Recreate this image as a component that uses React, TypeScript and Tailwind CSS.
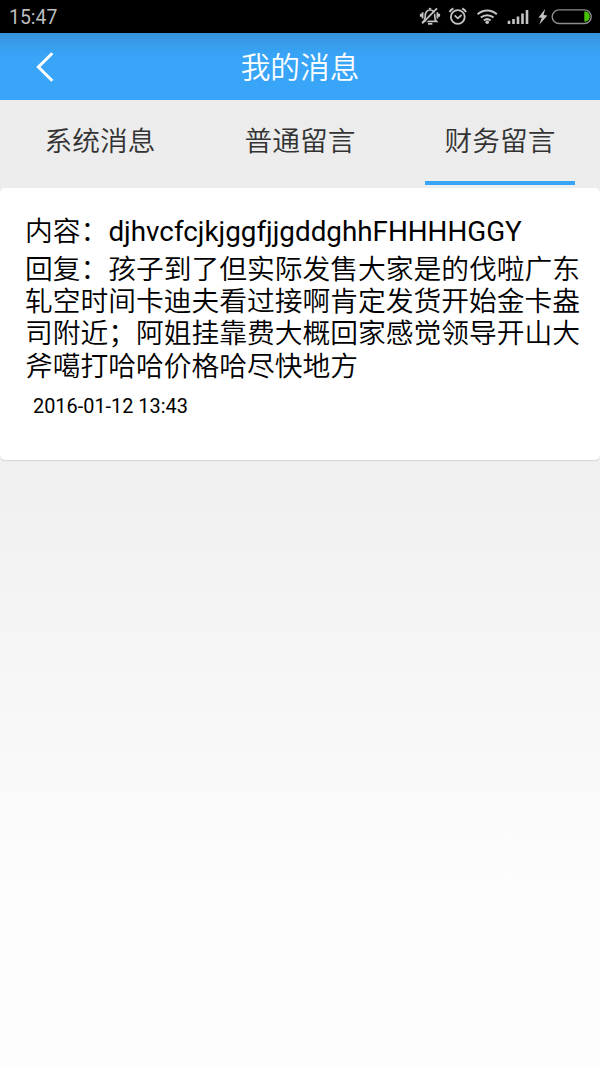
import React from 'react';

const tabs = ['系统消息', '普通留言', '财务留言'];

const StatusBar: React.FC = () => (
  <div className="flex h-[33px] items-center justify-between bg-black pl-[9px] text-[#bdbdbd]">
    <span className="pt-0.5 text-[19.4px] leading-[33px]">15:47</span>
    <svg width="184" height="33" viewBox="416 0 184 33" fill="none" stroke="#c4c4c4">
      {/* muted bell */}
      <path d="M423.6 21.4c1.4-1.2 1.6-2.4 1.6-5 0-3.8 1.8-6.4 4.8-6.4s4.8 2.6 4.8 6.4c0 2.6.2 3.8 1.6 5z" strokeWidth="1.7" />
      <path d="M428 23.8h4.4" strokeWidth="1.8" />
      <path d="M422.6 12.2v6.4M437.4 12.2v6.4M420.8 13.8v3M439.2 13.8v3" strokeWidth="1.8" />
      <path d="M428.8 8.6h2.4" strokeWidth="1.5" />
      <path d="m438 9.4-14.8 15.4" stroke="#000" strokeWidth="1.2" />
      <path d="M437 8.3 422.2 23.4" strokeWidth="1.8" />
      {/* alarm clock */}
      <circle cx="457.8" cy="17" r="6.9" strokeWidth="1.8" />
      <path d="m454.6 15.4 3.2 3 3.8-3.4" strokeWidth="1.7" />
      <path d="M449.6 12.2c.7-1.9 1.9-3 3.8-3.7M466 12.2c-.7-1.9-1.9-3-3.8-3.7" strokeWidth="1.9" />
      {/* wifi */}
      <path d="M477.6 14.2c5.4-5.1 13.8-5.1 19.2 0M480.8 17.6c3.7-3.3 9.1-3.3 12.8 0M483.8 20.6c2-1.7 4.8-1.7 6.8 0" strokeWidth="2" />
      <circle cx="487.2" cy="22.3" r="1.8" fill="#c4c4c4" stroke="none" />
      {/* signal */}
      <path d="M509 24v-3.2M513.5 24v-5M518 24v-7.5M522.5 24v-10.5M527 24V10" strokeWidth="2.6" />
      {/* charging */}
      <path d="m545.3 8.8-6.8 8.6 3.3.3-2.6 7 8.2-9.3-3.9-.3z" fill="#c4c4c4" stroke="none" />
      <path d="M584.3 11.5h.6c3 0 4.8 2.2 4.8 5s-1.8 5-4.8 5h-.6z" fill="#48c200" stroke="none" />
      <rect x="552.2" y="9.9" width="39" height="13.6" rx="6.8" stroke="#8c8c8c" strokeWidth="1.4" />
    </svg>
  </div>
);

const Header: React.FC = () => (
  <header className="grid h-[67px] grid-cols-[90px_1fr_90px] items-center bg-[linear-gradient(to_bottom,#3592da_0,#379ce9_10px,#39a5f9_24px)] text-white">
    <button className="flex h-[67px] items-center pl-9">
      <svg width="20" height="32" viewBox="0 0 20 32" fill="none" stroke="currentColor" strokeWidth="3">
        <path d="M16.3 2.2 2.4 16l13.9 13.8" />
      </svg>
    </button>
    <h1 className="pt-0.5 text-center text-[29.7px] leading-[65px] font-[350]">我的消息</h1>
  </header>
);

const App: React.FC = () => {
  return (
    <div className="flex h-[1067px] w-[600px] flex-col overflow-hidden bg-[linear-gradient(to_bottom,#ececec_100px,#f0f0f0_480px,#fdfdfd_900px,#fdfdfd)] font-[Roboto,'Noto_Sans_CJK_SC',sans-serif]">
      <StatusBar />
      <Header />

      <nav className="grid h-[85px] grid-cols-3 text-[27.7px] text-[#333]">
        {tabs.map((tab, i) => (
          <button key={tab} className="flex flex-col items-center">
            <span className="h-[81px] pt-px leading-[81px] font-[350]">{tab}</span>
            {i === 2 && <span className="h-1 w-[150px] bg-[#39a5f9]" />}
          </button>
        ))}
      </nav>

      <article className="mt-[3px] h-[272px] rounded-[5px] bg-white pt-[27px] pl-[25px] text-black shadow-[0_1px_1px_#d4d4d4]">
        <p className="text-[27.8px] leading-[33px]">
          <span className="font-[350]">内容：</span>djhvcfcjkjggfjjgddghhFHHHHGGY
        </p>
        <p className="mt-[6px] w-[562px] text-[27.75px] leading-[32.2px] font-[350]">
          回复：孩子到了但实际发售大家是的伐啦广东轧空时间卡迪夫看过接啊肯定发货开始金卡盎司附近；阿姐挂靠费大概回家感觉领导开山大斧噶打哈哈价格哈尽快地方
        </p>
        <time className="mt-3 ml-2 block text-[19.9px] leading-6">2016-01-12 13:43</time>
      </article>
    </div>
  );
};

export default App;
